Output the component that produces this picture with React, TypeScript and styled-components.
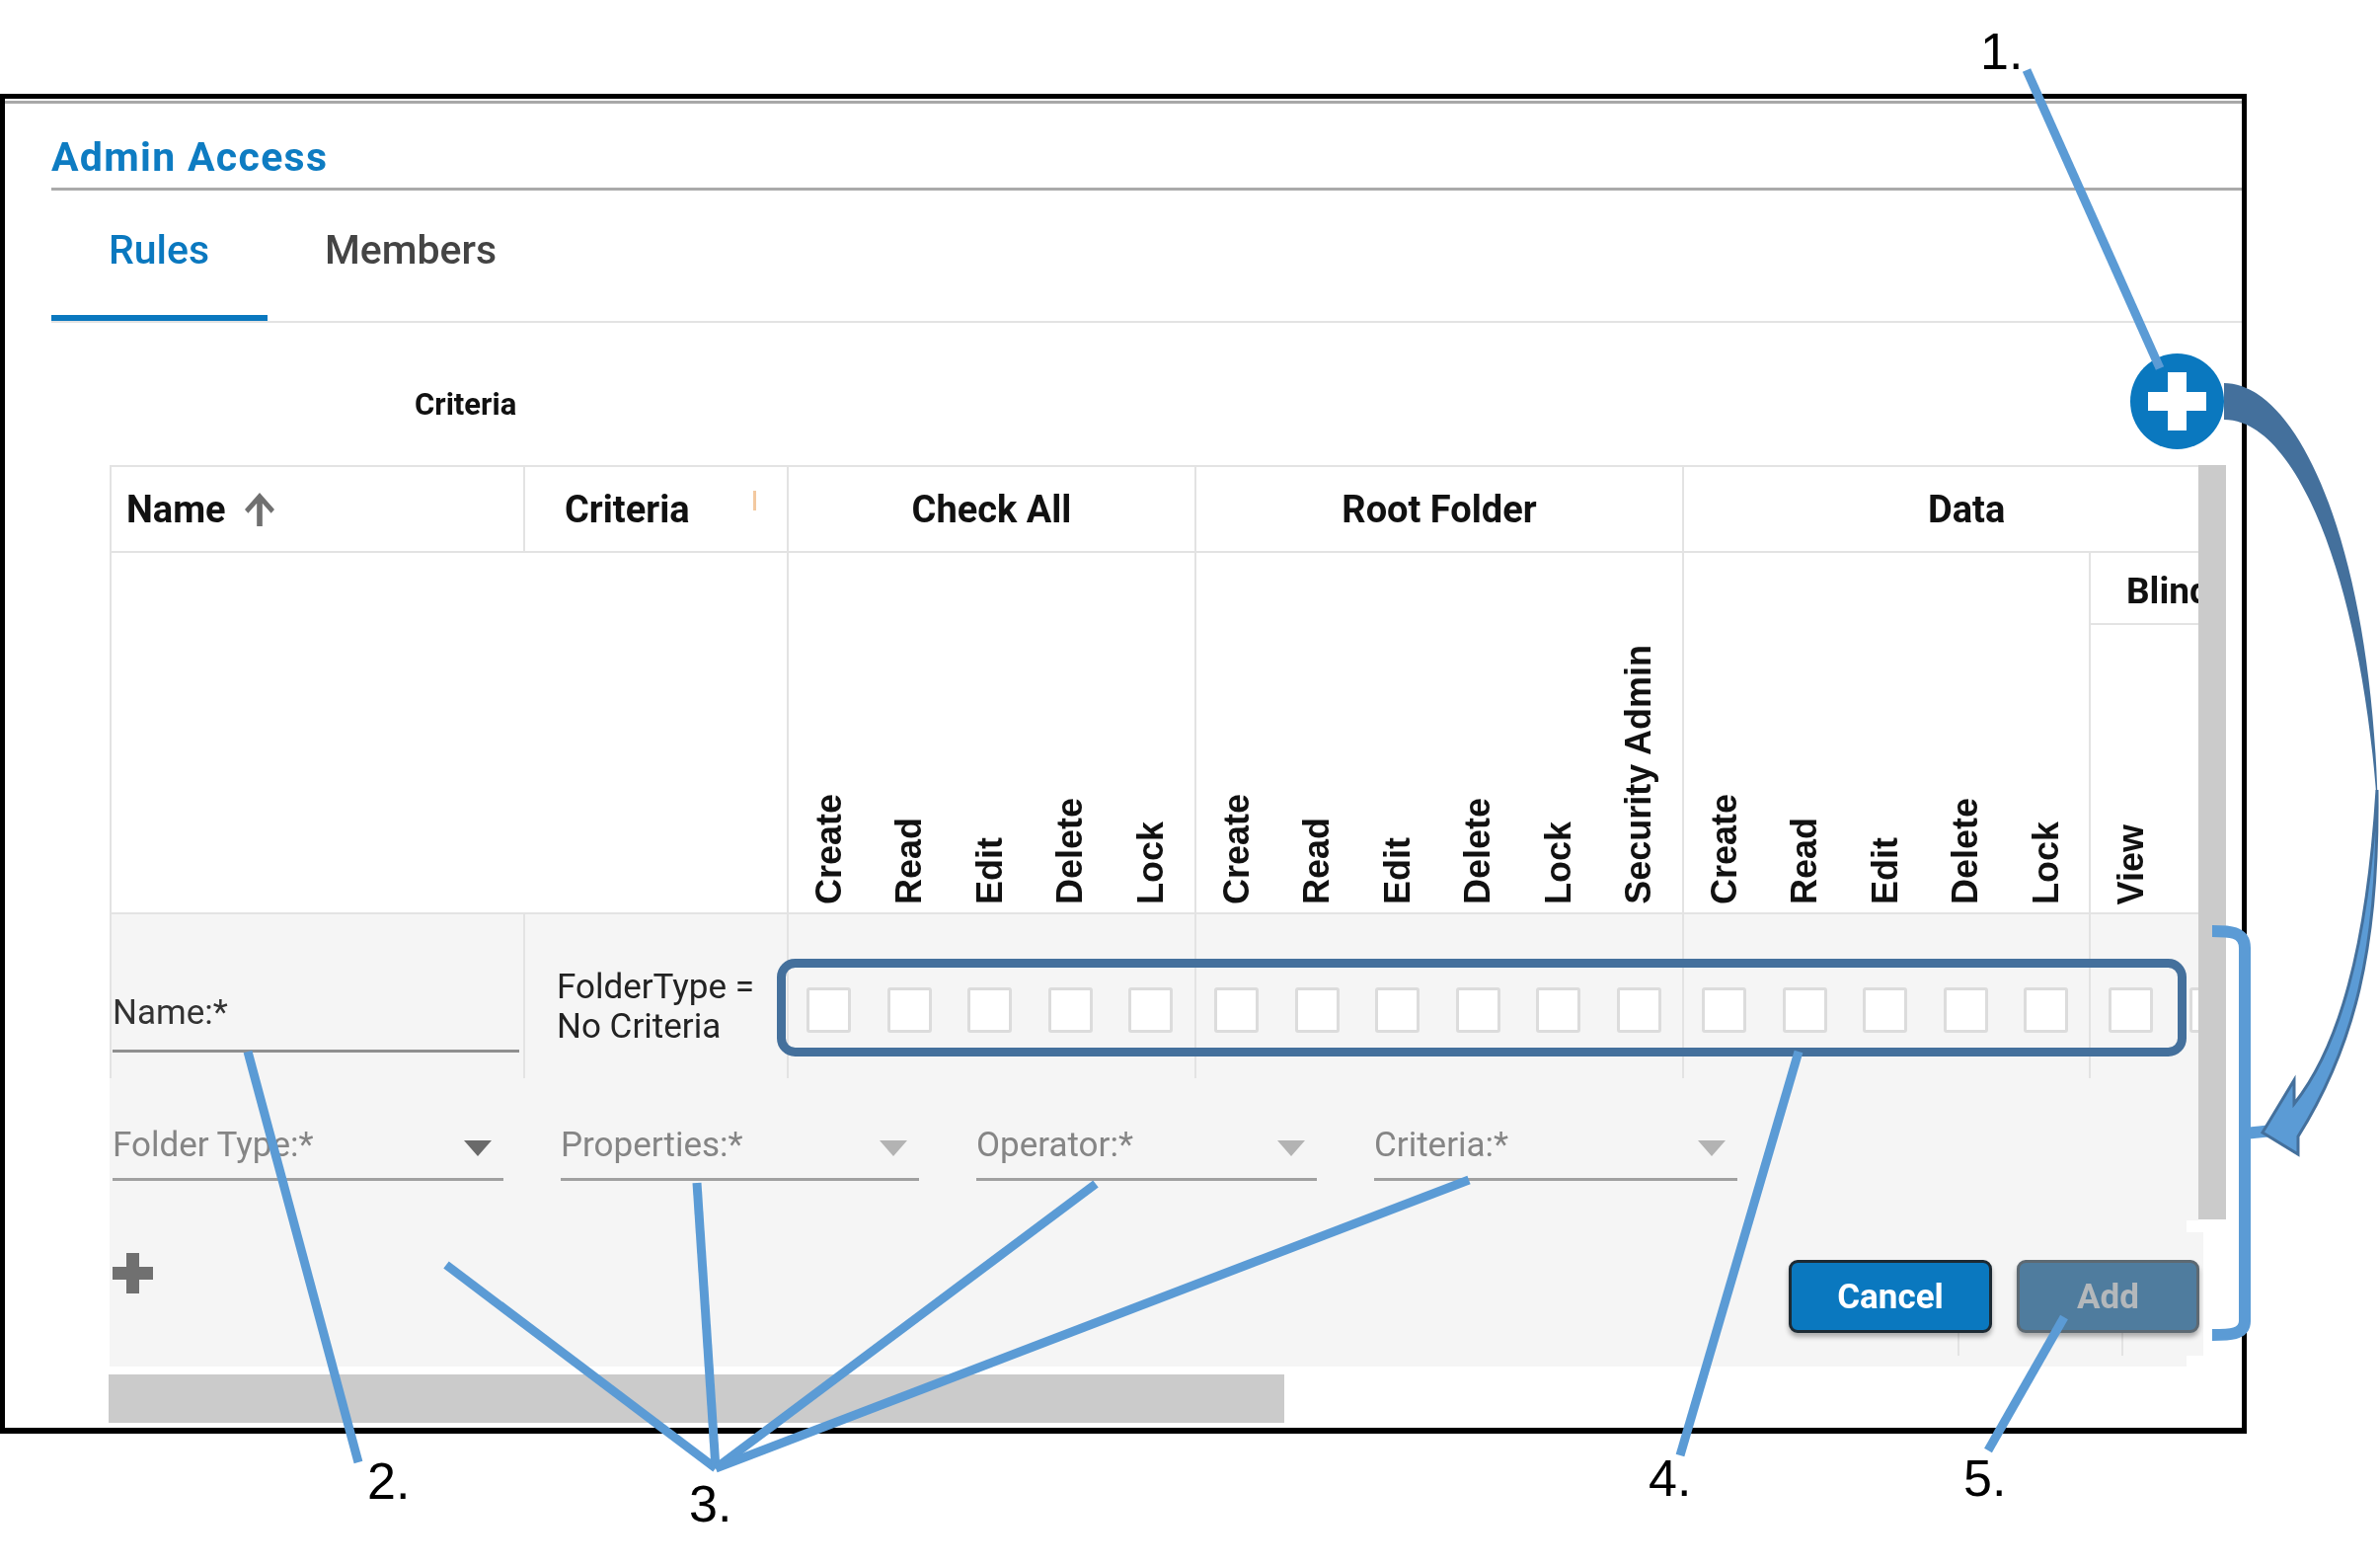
import React from 'react'
import styled, { createGlobalStyle } from 'styled-components'

const blue = '#0a78bf'
const rule = '#e3e3e3'
const panel = '#f5f5f5'
const note = '#5b9bd5'
const noteDark = '#44709c'
const columns = '419px 267px 413px 494px 412px 111px'

const GlobalStyle = createGlobalStyle`
  html, body {
    margin: 0;
    background: #fff;
  }
  * {
    box-sizing: border-box;
  }
`

const Page = styled.div`
  position: relative;
  width: 2411px;
  height: 1585px;
  overflow: hidden;
  padding-top: 95px;
  font-family: Roboto, 'Liberation Sans', sans-serif;
`

const Frame = styled.div`
  width: 2276px;
  height: 1357px;
  border: 5px solid #000;
  border-bottom-width: 6px;
`

const Inner = styled.div`
  filter: blur(0.6px);
`

const TopRule = styled.div`
  margin-top: 2px;
  height: 3px;
  background: #a8a8a8;
`

const TitleRow = styled.div`
  display: flex;
  align-items: center;
  height: 88px;
  margin-left: 47px;
  padding-top: 23px;
  border-bottom: 3px solid #aaa;
`

const Title = styled.div`
  color: #0e7cc2;
  font-size: 41px;
  font-weight: 700;
  letter-spacing: 1.3px;
`

const Tabs = styled.div`
  display: flex;
  height: 134px;
  margin-left: 47px;
  border-bottom: 2px solid ${rule};
`

const Tab = styled.div<{ $active?: boolean }>`
  display: flex;
  align-items: center;
  width: ${({ $active }) => ($active ? '219px' : 'auto')};
  padding: 0 0 ${({ $active }) => ($active ? '6px' : '12px')} 58px;
  color: ${({ $active }) => ($active ? blue : '#444')};
  border-bottom: ${({ $active }) => ($active ? `6px solid ${blue}` : 'none')};
  font-size: 41px;
  font-weight: 500;
`

const Toolbar = styled.div`
  display: flex;
  align-items: flex-start;
  height: 144px;
  padding: 0 18px 0 415px;
`

const SmallLabel = styled.div`
  margin-top: 63px;
  color: #111;
  font-size: 31px;
  font-weight: 700;
  line-height: 40px;
`

const RoundAdd = styled.button`
  display: flex;
  align-items: center;
  justify-content: center;
  width: 95px;
  height: 97px;
  margin: 31px 0 0 auto;
  padding: 0;
  border: none;
  border-radius: 50%;
  background: ${blue};
`

const TableRow = styled.div`
  display: flex;
  align-items: flex-start;
  margin-left: 106px;
`

const Body = styled.div`
  position: relative;
  width: 2116px;
`

const VScroll = styled.div`
  width: 28px;
  height: 764px;
  background: #cbcbcb;
`

const Grid = styled.div`
  display: grid;
  grid-template-columns: ${columns};
`

const HeaderRow = styled(Grid)`
  height: 89px;
  border-top: 2px solid ${rule};
  border-bottom: 2px solid ${rule};
`

const HeadCell = styled.div<{ $span?: number; $pad?: number; $center?: boolean }>`
  position: relative;
  display: flex;
  align-items: center;
  gap: 19px;
  grid-column: span ${({ $span }) => $span ?? 1};
  justify-content: ${({ $center }) => ($center ? 'center' : 'flex-start')};
  padding-left: ${({ $pad }) => $pad ?? 0}px;
  border-left: 2px solid ${rule};
  color: #111;
  font-size: 38px;
  font-weight: 700;
`

const OrangeNick = styled.i`
  position: absolute;
  left: 231px;
  top: 24px;
  width: 3px;
  height: 20px;
  background: #f3c9a0;
`

const LabelRow = styled(Grid)`
  height: 366px;
  border-bottom: 2px solid ${rule};
`

const Blank = styled.div`
  grid-column: span 2;
  border-left: 2px solid ${rule};
`

const Group = styled.div`
  display: flex;
  border-left: 2px solid ${rule};
  overflow: hidden;
`

const LabelCell = styled.div`
  display: flex;
  flex: 0 0 81.5px;
  align-items: flex-end;
  justify-content: center;
  padding-bottom: 8px;
`

const BlindLabel = styled(LabelCell)`
  flex: 1;
  width: 81.5px;
`

const Rotated = styled.span`
  writing-mode: vertical-rl;
  transform: rotate(180deg);
  color: #111;
  font-family: 'Liberation Sans', Arial, sans-serif;
  font-size: 36px;
  font-weight: 700;
  line-height: 1;
  white-space: nowrap;
`

const BlindColumn = styled.div`
  display: flex;
  flex-direction: column;
  border-left: 2px solid ${rule};
  overflow: hidden;
`

const BlindHead = styled.div`
  height: 73px;
  padding: 3px 0 0 36px;
  border-bottom: 2px solid ${rule};
  color: #111;
  font-size: 37px;
  font-weight: 700;
  line-height: 72px;
  white-space: nowrap;
`

const EditRow = styled(Grid)`
  height: 166px;
  background: ${panel};
`

const EditCell = styled.div`
  padding: 75px 4px 0 1px;
  border-left: 2px solid ${rule};
`

const NameField = styled.div`
  height: 65px;
  border-bottom: 3px solid #8f8f8f;
  color: #333;
  font-size: 35px;
  line-height: 50px;
`

const CriteriaCell = styled.div`
  padding: 54px 0 0 32px;
  border-left: 2px solid ${rule};
  color: #222;
  font-size: 35px;
  line-height: 40px;
`

const CheckCell = styled.div`
  display: flex;
  flex: 0 0 81.5px;
  justify-content: center;
  padding-top: 74px;
`

const Check = styled.span`
  flex: none;
  width: 45px;
  height: 46px;
  border: 3px solid #dcdcdc;
  border-radius: 3px;
  background: #fff;
`

const FormPanel = styled.div`
  display: flex;
  gap: 58px;
  height: 144px;
  padding: 44px 0 0 3px;
  background: ${panel};
`

const SelectField = styled.div<{ $width: number }>`
  display: flex;
  align-items: center;
  justify-content: space-between;
  width: ${({ $width }) => $width}px;
  height: 60px;
  padding: 0 12px 10px 0;
  border-bottom: 3px solid #a0a0a0;
  color: #858585;
  font-size: 35px;
`

const Caret = styled.i<{ $active?: boolean }>`
  width: 0;
  height: 0;
  margin-top: 6px;
  border-left: 14px solid transparent;
  border-right: 14px solid transparent;
  border-top: 16px solid ${({ $active }) => ($active ? '#6a6a6a' : '#b3b3b3')};
`

const ActionBar = styled.div`
  position: relative;
  display: flex;
  align-items: flex-start;
  width: 2104px;
  height: 148px;
  padding-left: 3px;
  background: ${panel};

  &::after {
    content: '';
    position: absolute;
    left: 100%;
    top: 12px;
    width: 17px;
    height: 125px;
    background: ${panel};
  }
`

const PlusIcon = styled.svg`
  margin-top: 33px;
`

const Buttons = styled.div`
  position: relative;
  z-index: 1;
  display: flex;
  gap: 25px;
  margin: 40px -13px 0 auto;
`

const ActionButton = styled.button<{ $disabled?: boolean }>`
  width: ${({ $disabled }) => ($disabled ? '185px' : '206px')};
  height: 74px;
  border: 3px solid ${({ $disabled }) => ($disabled ? '#5d6972' : '#1d2a33')};
  border-radius: 9px;
  background: ${({ $disabled }) => ($disabled ? '#4f7c9e' : blue)};
  box-shadow: 0 4px 5px rgba(0, 0, 0, 0.3);
  color: ${({ $disabled }) => ($disabled ? '#b4b8bb' : '#fff')};
  font-family: Roboto, 'Liberation Sans', sans-serif;
  font-size: 35px;
  font-weight: 700;
`

const Tick = styled.i<{ $left: number }>`
  position: absolute;
  left: ${({ $left }) => $left}px;
  top: 114px;
  width: 2px;
  height: 23px;
  background: ${rule};
`

const HScroll = styled.div`
  width: 1191px;
  height: 49px;
  margin: 8px 0 0 -1px;
  background: #cbcbcb;
`

const Overlay = styled.svg`
  position: absolute;
  left: 0;
  top: 0;
  pointer-events: none;
`

const Callout = styled.div<{ $x: number; $y: number }>`
  position: absolute;
  left: ${({ $x }) => $x}px;
  top: ${({ $y }) => $y}px;
  color: #000;
  font-family: 'Liberation Sans', Arial, sans-serif;
  font-size: 52px;
  line-height: 1;
`

const checkAll = ['Create', 'Read', 'Edit', 'Delete', 'Lock']
const rootFolder = ['Create', 'Read', 'Edit', 'Delete', 'Lock', 'Security Admin']
const data = ['Create', 'Read', 'Edit', 'Delete', 'Lock']

const selects = [
  { label: 'Folder Type:*', width: 396, active: true },
  { label: 'Properties:*', width: 363 },
  { label: 'Operator:*', width: 345 },
  { label: 'Criteria:*', width: 368 },
]

const noteLines = [
  [2053, 71, 2188, 373],
  [251, 1065, 363, 1481],
  [452, 1281, 725, 1487],
  [706, 1198, 725, 1487],
  [1110, 1199, 725, 1487],
  [1488, 1195, 725, 1487],
  [1822, 1065, 1702, 1474],
  [2091, 1334, 2014, 1469],
]

const callouts = [
  { text: '1.', x: 2006, y: 26 },
  { text: '2.', x: 372, y: 1474 },
  { text: '3.', x: 698, y: 1497 },
  { text: '4.', x: 1670, y: 1471 },
  { text: '5.', x: 1989, y: 1471 },
]

const LabelGroup = ({ labels }: { labels: string[] }) => (
  <Group>
    {labels.map((label, i) => (
      <LabelCell key={i}>
        <Rotated>{label}</Rotated>
      </LabelCell>
    ))}
  </Group>
)

const CheckGroup = ({ count }: { count: number }) => (
  <Group>
    {Array.from({ length: count }).map((_, i) => (
      <CheckCell key={i}>
        <Check />
      </CheckCell>
    ))}
  </Group>
)

export default function App() {
  return (
    <Page>
      <GlobalStyle />
      <Frame>
        <Inner>
          <TopRule />
          <TitleRow>
            <Title>Admin Access</Title>
          </TitleRow>
          <Tabs>
            <Tab $active>Rules</Tab>
            <Tab>Members</Tab>
          </Tabs>
          <Toolbar>
            <SmallLabel>Criteria</SmallLabel>
            <RoundAdd>
              <svg width="59" height="59" viewBox="0 0 59 59">
                <path d="M20 0h19v20h20v19H39v20H20V39H0V20h20z" fill="#fff" />
              </svg>
            </RoundAdd>
          </Toolbar>
          <TableRow>
            <Body>
              <HeaderRow>
                <HeadCell $pad={15}>
                  Name
                  <svg width="30" height="34" viewBox="4 4 16 16" preserveAspectRatio="none">
                    <path d="M4 12l1.8 1.8L10.5 9V20h3V9l4.7 4.8L20 12l-8-8-8 8z" fill="#707070" />
                  </svg>
                </HeadCell>
                <HeadCell $pad={40}>
                  Criteria
                  <OrangeNick />
                </HeadCell>
                <HeadCell $center>Check All</HeadCell>
                <HeadCell $center>Root Folder</HeadCell>
                <HeadCell $span={2} $pad={247}>
                  Data
                </HeadCell>
              </HeaderRow>
              <LabelRow>
                <Blank />
                <LabelGroup labels={checkAll} />
                <LabelGroup labels={rootFolder} />
                <LabelGroup labels={data} />
                <BlindColumn>
                  <BlindHead>Blind</BlindHead>
                  <BlindLabel>
                    <Rotated>View</Rotated>
                  </BlindLabel>
                </BlindColumn>
              </LabelRow>
              <EditRow>
                <EditCell>
                  <NameField>Name:*</NameField>
                </EditCell>
                <CriteriaCell>
                  FolderType =
                  <br />
                  No Criteria
                </CriteriaCell>
                <CheckGroup count={5} />
                <CheckGroup count={6} />
                <CheckGroup count={5} />
                <CheckGroup count={2} />
              </EditRow>
              <FormPanel>
                {selects.map((s) => (
                  <SelectField key={s.label} $width={s.width}>
                    {s.label}
                    <Caret $active={s.active} />
                  </SelectField>
                ))}
              </FormPanel>
              <ActionBar>
                <PlusIcon width="41" height="41" viewBox="0 0 41 41">
                  <path d="M14 0h13v14h14v13H27v14H14V27H0V14h14z" fill="#707070" />
                </PlusIcon>
                <Tick $left={1872} />
                <Tick $left={2038} />
                <Buttons>
                  <ActionButton>Cancel</ActionButton>
                  <ActionButton $disabled>Add</ActionButton>
                </Buttons>
              </ActionBar>
              <HScroll />
            </Body>
            <VScroll />
          </TableRow>
        </Inner>
      </Frame>
      <Overlay width="2411" height="1585" viewBox="0 0 2411 1585">
        <rect x="791.5" y="975.5" width="1419" height="90" rx="14" fill="none" stroke={noteDark} strokeWidth="9" />
        {noteLines.map(([x1, y1, x2, y2], i) => (
          <line key={i} x1={x1} y1={y1} x2={x2} y2={y2} stroke={note} strokeWidth="9" />
        ))}
        <path
          d="M2241 943C2258 943 2274 943 2274 960V1338C2274 1352 2258 1352 2241 1352M2274 1148L2302 1145"
          fill="none"
          stroke={note}
          strokeWidth="12"
        />
        <path d="M2253 388C2330 388 2405 560 2409 830C2395 600 2330 425 2253 425Z" fill={noteDark} />
        <path
          d="M2408 800C2410 960 2385 1060 2328 1151L2328 1169L2292 1147L2324 1094L2324 1118C2370 1060 2398 960 2408 800Z"
          fill={note}
          stroke={noteDark}
          strokeWidth="3"
        />
      </Overlay>
      {callouts.map((c) => (
        <Callout key={c.text} $x={c.x} $y={c.y}>
          {c.text}
        </Callout>
      ))}
    </Page>
  )
}
